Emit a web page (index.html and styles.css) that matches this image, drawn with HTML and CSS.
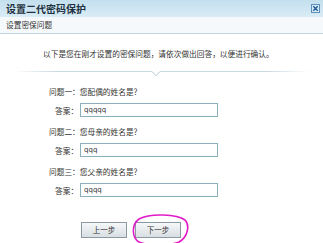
FILE: index.html
```html
<!DOCTYPE html>
<html lang="zh">
<head>
<meta charset="utf-8">
<title>设置二代密码保护</title>
<link rel="stylesheet" href="styles.css">
</head>
<body>
<div class="dialog">
  <div class="titlebar">
    <span class="title">设置二代密码保护</span>
    <span class="close" aria-label="关闭">
      <svg width="9" height="9" viewBox="0 0 9 9">
        <rect x="0.5" y="0.5" width="8" height="8" fill="#d6ebf8" stroke="#5d8fb8"/>
        <path d="M2.3 2.3 L6.7 6.7 M6.7 2.3 L2.3 6.7" stroke="#1f5a96" stroke-width="1.4"/>
      </svg>
    </span>
  </div>
  <div class="subbar">设置密保问题</div>
  <div class="content">
    <p class="intro">以下是您在刚才设置的密保问题，请依次做出回答，以便进行确认。</p>
    <div class="sep">
      <svg width="296" height="8" viewBox="0 0 296 8">
        <defs>
          <linearGradient id="g" x1="0" x2="1" y1="0" y2="0">
            <stop offset="0" stop-color="#c9d9e2" stop-opacity="0"/>
            <stop offset="0.15" stop-color="#c9d9e2"/>
            <stop offset="0.85" stop-color="#c9d9e2"/>
            <stop offset="1" stop-color="#c9d9e2" stop-opacity="0"/>
          </linearGradient>
        </defs>
        <path d="M0 0.5 H138 L142 5 L146 0.5 H296" fill="none" stroke="url(#g)" stroke-width="1"/>
        <path d="M138 0.5 L142 5 L146 0.5" fill="none" stroke="#c9d9e2" stroke-width="1"/>
      </svg>
    </div>
    <div class="qa">
      <div class="question">问题一：您配偶的姓名是？</div>
      <div class="answer"><span class="label">答案：</span><span class="input">qqqqq</span></div>
    </div>
    <div class="qa">
      <div class="question">问题二：您母亲的姓名是？</div>
      <div class="answer"><span class="label">答案：</span><span class="input">qqq</span></div>
    </div>
    <div class="qa">
      <div class="question">问题三：您父亲的姓名是？</div>
      <div class="answer"><span class="label">答案：</span><span class="input">qqqq</span></div>
    </div>
    <div class="buttons">
      <span class="btn">上一步</span>
      <span class="btn">下一步</span>
    </div>
  </div>
  <svg class="mark" width="62" height="34" viewBox="0 0 62 34">
    <path d="M9 6 C20 0 47 1 55 7 C60 12 58 24 49 29 C39 33 18 33 9 29 C2 25 1 12 9 6 Z" fill="none" stroke="#e21bc8" stroke-width="1.6"/>
  </svg>
</div>
</body>
</html>
```

FILE: styles.css
```css
* { box-sizing: border-box; }
html, body { margin: 0; padding: 0; background: #ffffff; }
body {
  font-family: "Noto Sans CJK SC", "Noto Sans", sans-serif;
  color: #333333;
  width: 323px;
  height: 243px;
  overflow: hidden;
}
.dialog { position: relative; width: 323px; height: 243px; background: #fff; }
.titlebar {
  height: 17px;
  background: linear-gradient(to bottom, #c3dfee, #d9ecf6);
  display: flex;
  align-items: center;
  justify-content: space-between;
  padding: 0 3px 0 6px;
}
.title {
  font-size: 10px;
  font-weight: bold;
  color: #1d3140;
}
.close { display: flex; margin-top: -1px; }
.subbar {
  height: 17px;
  background: #f6f9fb;
  border-bottom: 1px solid #c3d6e0;
  font-size: 7.7px;
  line-height: 16px;
  padding-left: 6px;
  color: #333;
}
.content { padding-top: 13px; }
.intro {
  margin: 0;
  font-size: 7.7px;
  line-height: 14px;
  padding-left: 43px;
  color: #333;
}
.sep { height: 8px; margin-top: 10px; margin-bottom: 5px; padding-left: 14px; display: flex; }
.qa { display: flex; flex-direction: column; }
.question {
  font-size: 7.7px;
  line-height: 15px;
  padding-left: 49px;
}
.qa + .qa { margin-top: 7px; }
.answer {
  display: flex;
  align-items: center;
  padding-left: 55px;
  margin-top: 4px;
  height: 14px;
}
.label { font-size: 7.7px; width: 25px; }
.input {
  width: 138px;
  height: 14px;
  border: 1px solid #8ab0bd;
  background: #fff;
  font-family: "DejaVu Sans", sans-serif;
  font-size: 7px;
  line-height: 12px;
  padding-left: 3px;
  color: #333;
}
.buttons {
  display: flex;
  gap: 8px;
  padding-left: 81px;
  margin-top: 25px;
}
.btn {
  width: 46px;
  height: 16px;
  border: 1px solid #8b99a3;
  background: linear-gradient(to bottom, #f6f8f9, #d8dee2);
  font-size: 7.5px;
  line-height: 14px;
  text-align: center;
  color: #333;
}
.mark { position: absolute; left: 130px; top: 213px; }
```
